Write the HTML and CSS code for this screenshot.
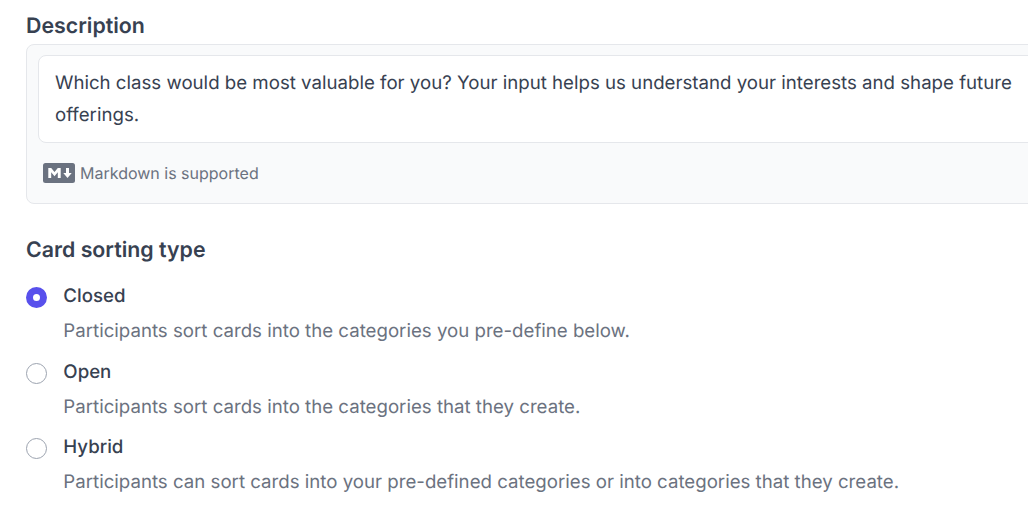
FILE: index.html
```html
<!DOCTYPE html>
<html lang="en">

<head>
    <meta charset="UTF-8">
    <title>Card sorting</title>
    <link rel="stylesheet" href="styles.css">
</head>

<body>
    <div class="container">
        <h3 class="label">Description</h3>
        <div class="editor">
            <div class="editor-input">Which class would be most valuable for you? Your input helps us understand your interests and shape future offerings.</div>
            <div class="editor-hint">
                <svg class="md-icon" width="32" height="20" viewBox="0 0 32 20">
                    <rect width="32" height="20" rx="2.5" fill="#6b7280"/>
                    <path d="M5.3 15V5h2.9l3.3 4 3.3-4h2.9v10h-2.9V9.3l-3.3 4-3.3-4V15z" fill="#fff"/>
                    <path d="M23 5h3v5h2.7l-4.2 5-4.2-5H23z" fill="#fff"/>
                </svg>
                <span>Markdown is supported</span>
            </div>
        </div>

        <h3 class="label type-label">Card sorting type</h3>
        <div class="options">
            <div class="option">
                <span class="radio checked"></span>
                <div class="option-name">Closed</div>
                <div class="option-desc">Participants sort cards into the categories you pre-define below.</div>
            </div>
            <div class="option">
                <span class="radio"></span>
                <div class="option-name">Open</div>
                <div class="option-desc">Participants sort cards into the categories that they create.</div>
            </div>
            <div class="option">
                <span class="radio"></span>
                <div class="option-name">Hybrid</div>
                <div class="option-desc">Participants can sort cards into your pre-defined categories or into categories that they create.</div>
            </div>
        </div>
    </div>
</body>

</html>
```

FILE: styles.css
```css
* {
    margin: 0;
    padding: 0;
    box-sizing: border-box;
    font-family: 'Inter', sans-serif;
    text-rendering: geometricPrecision;
}

html,
body {
    height: 510px;
    overflow: hidden;
    background: #fff;
}

.container {
    width: 1040px;
    margin-left: 26px;
    padding-top: 12px;
}

.label {
    font-size: 21.33px;
    line-height: 28px;
    font-weight: 600;
    color: #374151;
}

.editor {
    margin-top: 4px;
    height: 160px;
    padding: 10px 0 0 11px;
    background: #f9fafb;
    border: 1px solid #e5e7eb;
    border-radius: 8px;
}

.editor-input {
    height: 88px;
    padding: 11px 16px;
    width: 1000px;
    font-size: 18.67px;
    line-height: 32px;
    color: #374151;
    background: #fff;
    border: 1px solid #e5e7eb;
    border-radius: 8px;
}

.editor-hint {
    display: flex;
    align-items: center;
    gap: 5px;
    margin: 20px 0 0 5px;
    font-size: 16px;
    line-height: 20px;
    color: #6b7280;
}

.type-label {
    margin-top: 32px;
}

.options {
    margin-top: 18px;
}

.option {
    display: grid;
    grid-template-columns: 21.33px 1fr;
    column-gap: 16px;
    row-gap: 7.4px;
    align-content: start;
    height: 75.5px;
}

.option-name {
    font-size: 18.67px;
    line-height: 28px;
    font-weight: 500;
    color: #374151;
}

.option-desc {
    grid-column: 2;
    font-size: 18.67px;
    line-height: 28px;
    color: #6b7280;
}

.radio {
    width: 21.33px;
    height: 21.33px;
    margin-top: 5px;
    background: #fff;
    border: 1px solid #9ca3af;
    border-radius: 50%;
}

.radio.checked {
    border: 7px solid #5850ec;
}
```
